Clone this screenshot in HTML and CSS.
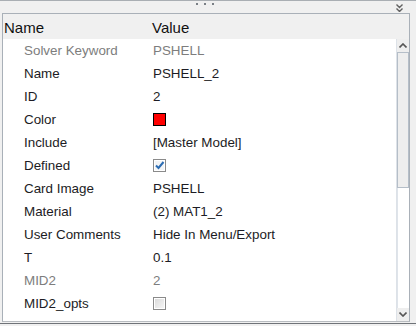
FILE: index.html
```html
<!DOCTYPE html>
<html>

<head>
    <title>Properties</title>
    <link rel="stylesheet" href="styles.css">
</head>

<body>
    <div class="topbar">
        <div class="grip"><span></span><span></span><span></span></div>
        <svg class="collapse" width="7" height="8" viewBox="0 0 7 8">
            <path d="M0.5 0.5 L3.5 3.5 L6.5 0.5 M0.5 4.5 L3.5 7.5 L6.5 4.5" fill="none" stroke="#606060" stroke-width="1.4"/>
        </svg>
    </div>
    <div class="panel">
        <div class="header">
            <div class="col-name">Name</div>
            <div class="col-value">Value</div>
        </div>
        <div class="body">
            <div class="list">
                <div class="row disabled"><div class="name">Solver Keyword</div><div class="value">PSHELL</div></div>
                <div class="row"><div class="name">Name</div><div class="value">PSHELL_2</div></div>
                <div class="row"><div class="name">ID</div><div class="value">2</div></div>
                <div class="row"><div class="name">Color</div><div class="value"><span class="swatch"></span></div></div>
                <div class="row"><div class="name">Include</div><div class="value">[Master Model]</div></div>
                <div class="row"><div class="name">Defined</div><div class="value"><span class="check checked"><svg width="11" height="11" viewBox="0 0 11 11"><path d="M2 5.5 L4.5 8 L9.5 2" fill="none" stroke="#2b6cb3" stroke-width="2"/></svg></span></div></div>
                <div class="row"><div class="name">Card Image</div><div class="value">PSHELL</div></div>
                <div class="row"><div class="name">Material</div><div class="value">(2) MAT1_2</div></div>
                <div class="row"><div class="name">User Comments</div><div class="value">Hide In Menu/Export</div></div>
                <div class="row"><div class="name">T</div><div class="value">0.1</div></div>
                <div class="row disabled"><div class="name">MID2</div><div class="value">2</div></div>
                <div class="row"><div class="name">MID2_opts</div><div class="value"><span class="check"></span></div></div>
            </div>
            <div class="scrollbar">
                <div class="arrow">
                    <svg width="8" height="5" viewBox="0 0 8 5"><path d="M0.5 4.5 L4 1 L7.5 4.5" fill="none" stroke="#555" stroke-width="1.6"/></svg>
                </div>
                <div class="thumb"></div>
                <div class="track"></div>
                <div class="arrow">
                    <svg width="8" height="5" viewBox="0 0 8 5"><path d="M0.5 0.5 L4 4 L7.5 0.5" fill="none" stroke="#555" stroke-width="1.6"/></svg>
                </div>
            </div>
        </div>
    </div>
    <div class="bottomline"></div>
</body>

</html>
```
FILE: styles.css
```css
body {
    margin: 0;
    width: 416px;
    height: 326px;
    background-color: #f0f0f0;
    font-family: "Liberation Sans", Arial, sans-serif;
    overflow: hidden;
}

.topbar {
    height: 12px;
    border-top: 1px solid #a9aeb3;
    position: relative;
}

.grip {
    display: flex;
    justify-content: center;
    gap: 6px;
    padding-top: 2px;
    margin-left: -6px;
}

.grip span {
    width: 2px;
    height: 2px;
    background-color: #7a7f85;
}

.collapse {
    position: absolute;
    left: 396px;
    top: 3px;
}

.panel {
    margin-left: 2px;
    width: 406px;
    border: 1px solid #a9b0b8;
    border-bottom-color: #b8bcc0;
    height: 307px;
}

.header {
    display: flex;
    height: 25px;
    align-items: center;
    font-size: 15px;
    color: #101010;
    padding-top: 1px;
    box-sizing: border-box;
}

.col-name {
    width: 148px;
    padding-left: 1px;
}

.body {
    display: flex;
    height: 282px;
}

.list {
    flex: 1;
    background-color: #ffffff;
}

.row {
    display: flex;
    height: 23px;
    align-items: center;
    font-size: 13.4px;
    color: #1c1c24;
}

.row .name {
    width: 129px;
    padding-left: 21px;
}

.row.disabled {
    color: #7d7d7d;
}

.swatch {
    display: block;
    width: 11px;
    height: 11px;
    background-color: #ff0000;
    border: 1px solid #000000;
}

.check {
    display: block;
    width: 11px;
    height: 11px;
    border: 1px solid #8a8a8a;
    background: linear-gradient(135deg, #d8d8d8, #f8f8f8);
    box-shadow: inset 0 0 0 1px #ffffff;
}

.check.checked {
    background: #f2f4f6;
}

.check svg {
    display: block;
}

.scrollbar {
    width: 12px;
    display: flex;
    flex-direction: column;
    background-color: #ffffff;
    border-left: 1px solid #dde2e8;
}

.arrow {
    height: 13px;
    display: flex;
    align-items: center;
    justify-content: center;
    background-color: #eeeeee;
}

.thumb {
    height: 136px;
    background-color: #eeeeee;
    border: 1px solid #b5bec8;
    box-sizing: border-box;
}

.track {
    flex: 1;
    background-color: #ffffff;
    border-left: 1px solid #dfe4ea;
}

.bottomline {
    margin-top: 1px;
    height: 1px;
    width: 416px;
    background-color: #6f7378;
}
```
